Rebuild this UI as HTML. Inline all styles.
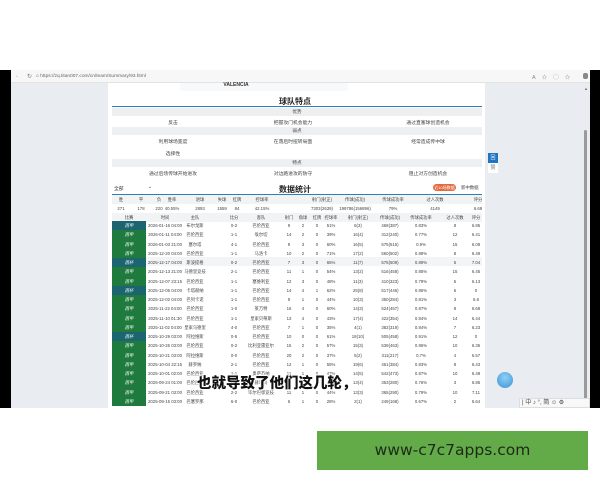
<!DOCTYPE html>
<html><head><meta charset="utf-8"><style>
*{margin:0;padding:0;box-sizing:border-box}
body{width:600px;height:480px;background:#fff;position:relative;overflow:hidden;font-family:"Liberation Sans","Noto Sans CJK SC",sans-serif;color:#333}
.a{position:absolute}
.c{position:absolute;transform:translateX(-50%);white-space:nowrap}
.r{position:absolute;left:108px;width:377px;height:9.26px;font-size:4.3px;line-height:9.26px;color:#444}
.r span{position:absolute;transform:translateX(-50%);white-space:nowrap}
.r span:nth-child(1){left:21px;color:#fff;font-style:italic}
.r span:nth-child(2){left:57px}
.r span:nth-child(3){left:87px}
.r span:nth-child(4){left:126px}
.r span:nth-child(5){left:153px}
.r span:nth-child(6){left:181px}
.r span:nth-child(7){left:195px}
.r span:nth-child(8){left:209px}
.r span:nth-child(9){left:223px}
.r span:nth-child(10){left:250px}
.r span:nth-child(11){left:282px}
.r span:nth-child(12){left:313px}
.r span:nth-child(13){left:347px}
.r span:nth-child(14){left:368px}
.g{position:absolute;left:112px;width:34px;height:9.26px;background:#1f7a3e}
.t{background:#1b6470}
.f{font-size:4.8px;color:#444}
.sec{position:absolute;left:112px;width:370px;background:#eeeff1;font-size:4.6px;text-align:center;color:#444}
</style></head><body>
<div class="a" style="left:0;top:70px;width:11px;height:338px;background:#000"></div>
<div class="a" style="left:590px;top:70px;width:10px;height:338px;background:#000"></div>
<div class="a" style="left:11px;top:70px;width:579px;height:338px;background:#e9ecf0"></div>
<div class="a" style="left:11px;top:70px;width:579px;height:13px;background:#f7f7f7;border-bottom:1px solid #e3e3e3"></div>
<div class="a f" style="left:15px;top:74px;color:#999">←</div>
<div class="a f" style="left:27px;top:73px;font-size:6px;color:#777">↻</div>
<div class="a f" style="left:36px;top:74px;color:#666">⌂ https://zq.titan007.com/cn/team/Summary/93.html</div>
<div class="a f" style="left:532px;top:73px;color:#888;font-size:5.5px;letter-spacing:6px">A☆◯☆</div>
<div class="a" style="left:583px;top:73px;width:5px;height:6px;background:#888;border-radius:2px"></div>
<div class="a" style="left:584px;top:130px;width:3px;height:278px;background:#9a9a9a;border-radius:2px"></div>
<div class="a" style="left:584px;top:86px;font-size:4px;color:#777">▲</div>
<div class="a" style="left:108px;top:83px;width:377px;height:325px;background:#fff"></div>
<div class="a" style="left:180px;top:83px;width:168px;height:8px;background:#f8f9fa"></div>
<div class="c" style="left:236px;top:82px;font-size:5px;font-weight:bold;color:#333">VALENCIA</div>
<div class="c" style="left:295px;top:96px;font-size:8px;font-weight:bold;color:#222">球队特点</div>
<div class="a" style="left:112px;top:106px;width:370px;height:1px;background:#2d7fb8"></div>
<div class="sec" style="top:108px;height:8px;line-height:8px">优势</div>
<div class="c f" style="left:173px;top:119px">反击</div>
<div class="c f" style="left:293px;top:119px">把握攻门机会能力</div>
<div class="c f" style="left:428px;top:119px">通过直塞球创造机会</div>
<div class="sec" style="top:127px;height:8px;line-height:8px">弱点</div>
<div class="c f" style="left:173px;top:138px">利用球场宽度</div>
<div class="c f" style="left:293px;top:138px">在落后时扭转局面</div>
<div class="c f" style="left:428px;top:138px">经常造成传中球</div>
<div class="c f" style="left:173px;top:150px">选择性</div>
<div class="sec" style="top:159px;height:8px;line-height:8px">特点</div>
<div class="c f" style="left:173px;top:170px">通过后场传球开始进攻</div>
<div class="c f" style="left:293px;top:170px">对边路进攻的防守</div>
<div class="c f" style="left:428px;top:170px">阻止对方创造机会</div>
<div class="a f" style="left:114px;top:185px">全部</div>
<div class="a f" style="left:148px;top:185px">⌄</div>
<div class="c" style="left:295px;top:184px;font-size:8px;font-weight:bold;color:#222">数据统计</div>
<div class="a" style="left:433px;top:184px;width:23px;height:7px;background:#e26a3c;border-radius:4px;font-size:4px;color:#fff;text-align:center;line-height:7px">近10场数据</div>
<div class="a f" style="left:461px;top:185px;font-size:4.4px">新中数据</div>
<div class="a" style="left:112px;top:194px;width:370px;height:1px;background:#2d7fb8"></div>
<div class="a" style="left:112px;top:195px;width:370px;height:9px;background:#f2f3f5"></div>
<div class="r" style="top:195px">
<span style="left:13px;color:#444;font-style:normal">胜</span><span style="left:33px">平</span><span style="left:51px">负</span><span style="left:64px">胜率</span><span style="left:92px">进球</span><span style="left:114px">失球</span><span style="left:129px">红牌</span><span style="left:154px">控球率</span><span style="left:214px">射门(射正)</span><span style="left:247px">传球(成功)</span><span style="left:285px">传球成功率</span><span style="left:327px">过人次数</span><span style="left:370px">评分</span></div>
<div class="r" style="top:204px">
<span style="left:13px;color:#444;font-style:normal">271</span><span style="left:33px">178</span><span style="left:51px">220</span><span style="left:64px">40.55%</span><span style="left:92px">2893</span><span style="left:114px">1559</span><span style="left:129px">84</span><span style="left:154px">42.15%</span><span style="left:214px">7303(2639)</span><span style="left:247px">199786(156896)</span><span style="left:285px">79%</span><span style="left:327px">4149</span><span style="left:370px">6.68</span></div>
<div class="a" style="left:112px;top:213px;width:370px;height:9px;background:#f2f3f5"></div>
<div class="r" style="top:212.5px"><span style="color:#444;font-style:normal">比赛</span><span>时间</span><span>主队</span><span>比分</span><span>客队</span><span>射门</span><span>角球</span><span>红牌</span><span>控球率</span><span>射门(射正)</span><span>传球(成功)</span><span>传球成功率</span><span>过人次数</span><span>评分</span></div>
<div class="a" style="left:146px;top:257px;width:336px;height:9px;background:#f3f4f6"></div>
<div class="g t" style="top:221px"></div><div class="g" style="top:230.3px"></div><div class="g" style="top:239.5px"></div><div class="g" style="top:248.8px"></div><div class="g t" style="top:258px"></div><div class="g" style="top:267.3px"></div><div class="g" style="top:276.6px"></div><div class="g t" style="top:285.8px"></div><div class="g" style="top:295.1px"></div><div class="g" style="top:304.3px"></div><div class="g" style="top:313.6px"></div><div class="g" style="top:322.9px"></div><div class="g t" style="top:332.1px"></div><div class="g" style="top:341.4px"></div><div class="g" style="top:350.6px"></div><div class="g" style="top:359.9px"></div><div class="g" style="top:369.2px"></div><div class="g" style="top:378.4px"></div><div class="g" style="top:387.7px"></div><div class="g" style="top:396.9px;height:9px"></div>
<div class="r" style="top:221px"><span>西甲</span><span>2026-01-16 04:00</span><span>布尔戈斯</span><span>0-2</span><span>巴伦西亚</span><span>9</span><span>2</span><span>0</span><span>51%</span><span>6(3)</span><span>468(387)</span><span>0.83%</span><span>8</span><span>6.95</span></div>
<div class="r" style="top:230.3px"><span>西甲</span><span>2026-01-11 04:00</span><span>巴伦西亚</span><span>1-1</span><span>埃尔切</span><span>14</span><span>2</span><span>0</span><span>39%</span><span>16(4)</span><span>312(240)</span><span>0.77%</span><span>12</span><span>6.41</span></div>
<div class="r" style="top:239.5px"><span>西甲</span><span>2026-01-03 21:00</span><span>塞尔塔</span><span>4-1</span><span>巴伦西亚</span><span>9</span><span>3</span><span>0</span><span>60%</span><span>16(5)</span><span>575(515)</span><span>0.9%</span><span>15</span><span>6.08</span></div>
<div class="r" style="top:248.8px"><span>西甲</span><span>2025-12-20 04:00</span><span>巴伦西亚</span><span>1-1</span><span>马洛卡</span><span>10</span><span>2</span><span>0</span><span>71%</span><span>17(2)</span><span>560(502)</span><span>0.88%</span><span>8</span><span>6.49</span></div>
<div class="r" style="top:258px"><span>西杯</span><span>2025-12-17 04:00</span><span>斯波提格</span><span>0-2</span><span>巴伦西亚</span><span>7</span><span>3</span><span>0</span><span>65%</span><span>11(7)</span><span>575(509)</span><span>0.89%</span><span>5</span><span>7.04</span></div>
<div class="r" style="top:267.3px"><span>西甲</span><span>2025-12-13 21:00</span><span>马德里竞技</span><span>2-1</span><span>巴伦西亚</span><span>11</span><span>1</span><span>0</span><span>54%</span><span>13(2)</span><span>516(458)</span><span>0.85%</span><span>15</span><span>6.45</span></div>
<div class="r" style="top:276.6px"><span>西甲</span><span>2025-12-07 23:15</span><span>巴伦西亚</span><span>1-1</span><span>塞维利亚</span><span>12</span><span>3</span><span>0</span><span>48%</span><span>11(3)</span><span>410(323)</span><span>0.79%</span><span>5</span><span>6.13</span></div>
<div class="r" style="top:285.8px"><span>西杯</span><span>2025-12-05 04:00</span><span>卡塔赫纳</span><span>1-1</span><span>巴伦西亚</span><span>14</span><span>4</span><span>1</span><span>62%</span><span>25(8)</span><span>517(446)</span><span>0.86%</span><span>6</span><span>0</span></div>
<div class="r" style="top:295.1px"><span>西甲</span><span>2025-12-02 04:00</span><span>巴列卡诺</span><span>1-1</span><span>巴伦西亚</span><span>9</span><span>1</span><span>0</span><span>44%</span><span>10(3)</span><span>350(284)</span><span>0.81%</span><span>3</span><span>6.6</span></div>
<div class="r" style="top:304.3px"><span>西甲</span><span>2025-11-22 04:00</span><span>巴伦西亚</span><span>1-0</span><span>莱万特</span><span>16</span><span>4</span><span>0</span><span>60%</span><span>14(3)</span><span>524(457)</span><span>0.87%</span><span>8</span><span>6.68</span></div>
<div class="r" style="top:313.6px"><span>西甲</span><span>2025-11-10 01:30</span><span>巴伦西亚</span><span>1-1</span><span>皇家贝蒂斯</span><span>13</span><span>4</span><span>0</span><span>43%</span><span>17(4)</span><span>422(354)</span><span>0.84%</span><span>14</span><span>6.44</span></div>
<div class="r" style="top:322.9px"><span>西甲</span><span>2025-11-02 04:00</span><span>皇家马德里</span><span>4-0</span><span>巴伦西亚</span><span>7</span><span>1</span><span>0</span><span>35%</span><span>4(1)</span><span>382(319)</span><span>0.84%</span><span>7</span><span>6.23</span></div>
<div class="r" style="top:332.1px"><span>西杯</span><span>2025-10-29 03:00</span><span>阿拉维斯</span><span>0-5</span><span>巴伦西亚</span><span>10</span><span>0</span><span>0</span><span>61%</span><span>19(10)</span><span>505(458)</span><span>0.91%</span><span>12</span><span>0</span></div>
<div class="r" style="top:341.4px"><span>西甲</span><span>2025-10-26 03:00</span><span>巴伦西亚</span><span>0-2</span><span>比利亚雷亚尔</span><span>15</span><span>2</span><span>0</span><span>57%</span><span>15(3)</span><span>539(463)</span><span>0.86%</span><span>10</span><span>6.36</span></div>
<div class="r" style="top:350.6px"><span>西甲</span><span>2025-10-21 03:00</span><span>阿拉维斯</span><span>0-0</span><span>巴伦西亚</span><span>20</span><span>2</span><span>0</span><span>37%</span><span>5(2)</span><span>311(217)</span><span>0.7%</span><span>4</span><span>6.57</span></div>
<div class="r" style="top:359.9px"><span>西甲</span><span>2025-10-04 22:15</span><span>赫罗纳</span><span>2-1</span><span>巴伦西亚</span><span>12</span><span>1</span><span>0</span><span>55%</span><span>19(6)</span><span>461(384)</span><span>0.83%</span><span>8</span><span>6.43</span></div>
<div class="r" style="top:369.2px"><span>西甲</span><span>2025-10-01 02:00</span><span>巴伦西亚</span><span>1-1</span><span>奥萨苏纳</span><span>11</span><span>1</span><span>0</span><span>47%</span><span>14(5)</span><span>542(473)</span><span>0.87%</span><span>10</span><span>6.48</span></div>
<div class="r" style="top:378.4px"><span>西甲</span><span>2025-09-24 01:00</span><span>巴伦西亚</span><span>2-1</span><span>赫塔费</span><span>9</span><span>1</span><span>0</span><span>46%</span><span>13(4)</span><span>363(280)</span><span>0.76%</span><span>3</span><span>6.85</span></div>
<div class="r" style="top:387.7px"><span>西甲</span><span>2025-09-21 03:00</span><span>巴伦西亚</span><span>2-2</span><span>毕尔巴鄂竞技</span><span>11</span><span>1</span><span>0</span><span>44%</span><span>13(3)</span><span>365(290)</span><span>0.79%</span><span>10</span><span>7.11</span></div>
<div class="r" style="top:396.9px"><span>西甲</span><span>2025-09-15 03:00</span><span>巴塞罗那</span><span>6-0</span><span>巴伦西亚</span><span>6</span><span>1</span><span>0</span><span>28%</span><span>2(1)</span><span>249(168)</span><span>0.67%</span><span>2</span><span>5.64</span></div>
<div class="a" style="left:488px;top:153px;width:10px;height:10px;background:#1f74c4;color:#fff;font-size:5px;text-align:center;line-height:10px">回</div>
<div class="a" style="left:488px;top:163px;width:10px;height:10px;background:#fff;color:#666;font-size:5px;text-align:center;line-height:10px">赞</div>
<div class="a" style="left:497px;top:372px;width:16px;height:16px;border-radius:50%;background:radial-gradient(circle at 50% 35%,#8fd0f5,#3a93d6)"></div>
<div class="a" style="left:519px;top:398px;width:71px;height:10px;background:#f8f8f8;border:1px solid #ddd;font-size:6px;line-height:8px;color:#444;padding-left:2px;white-space:nowrap">|&nbsp;中&nbsp;♪&nbsp;°,&nbsp;简&nbsp;☺&nbsp;⚙</div>
<div class="a" style="left:197px;top:374px;font-size:14.5px;line-height:18px;font-weight:900;color:#111;white-space:nowrap;font-family:'Noto Sans CJK SC',sans-serif;text-shadow:0 0 2px #fff,0 0 2px #fff,1px 1px 1px #fff,-1px -1px 1px #fff">也就导致了他们这几轮，</div>
<div class="a" style="left:317px;top:431px;width:271px;height:39px;background:#63ab48;color:#1d2a1a;font-size:15.5px;text-align:center;line-height:39px;font-family:'DejaVu Sans',sans-serif">www-c7c7apps.com</div>
</body></html>
